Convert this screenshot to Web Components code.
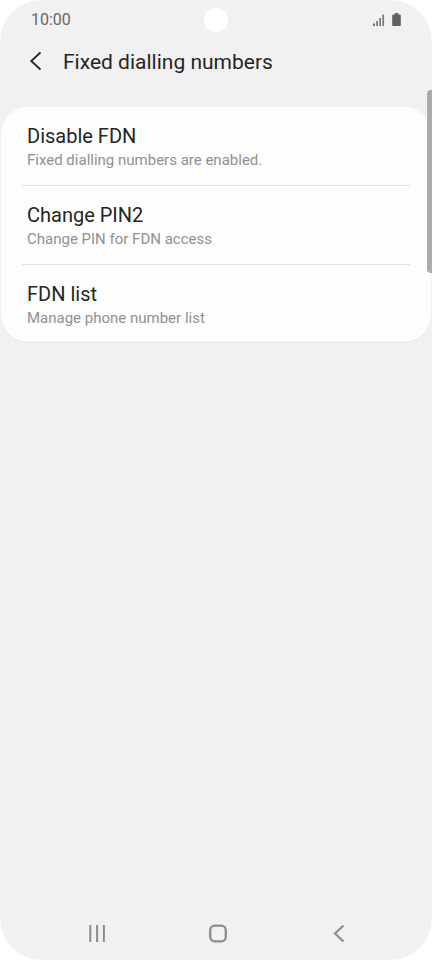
<!DOCTYPE html>
<html lang="en">
<head>
<meta charset="utf-8">
<meta name="viewport" content="width=device-width, initial-scale=1">
<title>Fixed dialling numbers</title>
<style>
html, body { height: 100%; }
body { margin: 0; background: #fff; font-family: Roboto, "Liberation Sans", sans-serif; color: #252525; }
</style>
</head>
<body>
<phone-screen>
  <status-bar slot="status" time="10:00"></status-bar>
  <page-header slot="header">Fixed dialling numbers</page-header>
  <settings-card>
    <settings-item>Disable FDN<span slot="detail">Fixed dialling numbers are enabled.</span></settings-item>
    <settings-item>Change PIN2<span slot="detail">Change PIN for FDN access</span></settings-item>
    <settings-item>FDN list<span slot="detail">Manage phone number list</span></settings-item>
  </settings-card>
  <nav-bar slot="nav"></nav-bar>
</phone-screen>
<script>
function define(name, html, setup) {
  const template = document.createElement('template');
  template.innerHTML = html;
  customElements.define(name, class extends HTMLElement {
    constructor() {
      super();
      this.attachShadow({ mode: 'open' }).append(template.content.cloneNode(true));
    }
    connectedCallback() { if (setup) setup(this); }
  });
}

define('phone-screen', `
<style>
:host { position: relative; display: flex; flex-direction: column; min-height: 100vh; box-sizing: border-box; background: #f1f1f1; border-radius: 42px; overflow: hidden; }
main { flex: 1; padding: 0 1px; }
.thumb { position: absolute; top: 90px; right: 0; width: 5px; height: 183px; background: #ababab; border-radius: 4px 0 0 4px; }
</style>
<slot name="status"></slot>
<slot name="header"></slot>
<main><slot></slot></main>
<slot name="nav"></slot>
<div class="thumb"></div>`);

define('status-bar', `
<style>
:host { display: grid; grid-template-columns: 1fr 24px 1fr; align-items: center; height: 40px; padding: 0 31px; color: #666; font-size: 16px; line-height: 20px; }
.camera { width: 24px; height: 24px; border-radius: 50%; background: #fff; }
.icons { display: flex; justify-content: flex-end; gap: 7px; }
svg { display: block; }
</style>
<span class="time"></span>
<span class="camera"></span>
<span class="icons">
  <svg width="12" height="14" viewBox="0 0 12 14" fill="#777" aria-label="Signal"><path d="M0 10.5h2V13H0zM3.2 8H5v5H3.2zM6.3 5H8v8H6.3zM9.4 1.500h1.700V13H9.400z"/></svg>
  <svg width="9" height="14" viewBox="0 0 9 14" fill="#616161" aria-label="Battery"><path d="M2.800 0h3.400v1.400h1.600q1 0 1 1V12q0 1-1 1H1.200q-1 0-1-1V2.400q0-1 1-1h1.600z"/></svg>
</span>`, el => { el.shadowRoot.querySelector('.time').textContent = el.getAttribute('time'); });

define('page-header', `
<style>
:host { display: flex; align-items: center; height: 44px; padding: 0 24px 23px; gap: 15px; }
button { display: block; padding: 0; border: 0; background: none; color: inherit; }
svg { display: block; }
h1 { margin: 0; font-size: 21px; line-height: 28px; font-weight: 400; }
</style>
<button type="button" aria-label="Back"><svg width="24" height="24" viewBox="0 0 24 24" fill="none" stroke="#252525" stroke-width="1.8"><path d="M16.500 2.500L7.200 11l9.300 8.500"/></svg></button>
<h1><slot></slot></h1>`);

define('settings-card', `
<style>
:host { display: block; background: #fdfdfd; border-radius: 27px; box-shadow: 0 1px 0 #e6e6e6; }
</style>
<slot></slot>`);

define('settings-item', `
<style>
:host { display: block; padding: 0 21px; }
button { display: flex; flex-direction: column; width: 100%; padding: 15px 5px; border: 0; background: none; font: inherit; color: inherit; text-align: left; }
:host(:not(:last-child)) button { border-bottom: 1px solid #e2e2e2; }
:host(:last-child) button { padding-bottom: 14px; }
.title { font-size: 20px; line-height: 28px; }
.detail { font-size: 15px; line-height: 20px; color: #919191; }
</style>
<button type="button"><span class="title"><slot></slot></span><span class="detail"><slot name="detail"></slot></span></button>`);

define('nav-bar', `
<style>
:host { display: block; }
nav { display: flex; justify-content: space-between; padding: 0 80px 10px; }
button { display: block; padding: 0; border: 0; background: none; }
svg { display: block; }
</style>
<nav aria-label="System">
<button type="button" aria-label="Recent apps"><svg width="34" height="34" viewBox="0 0 34 34" fill="none" stroke="#8c8c8c" stroke-width="2"><path d="M10.300 9v17M17.100 9v17M23.900 9v17"/></svg></button>
<button type="button" aria-label="Home"><svg width="34" height="34" viewBox="0 0 34 34" fill="none" stroke="#8c8c8c" stroke-width="2.300"><rect x="11.200" y="9.700" width="15.600" height="15.600" rx="4.500"/></svg></button>
<button type="button" aria-label="Back"><svg width="34" height="34" viewBox="0 0 34 34" fill="none" stroke="#8c8c8c" stroke-width="2.200"><path d="M25.500 9.500L17 17.500l8.500 8"/></svg></button>
</nav>`);
</script>
</body>
</html>
